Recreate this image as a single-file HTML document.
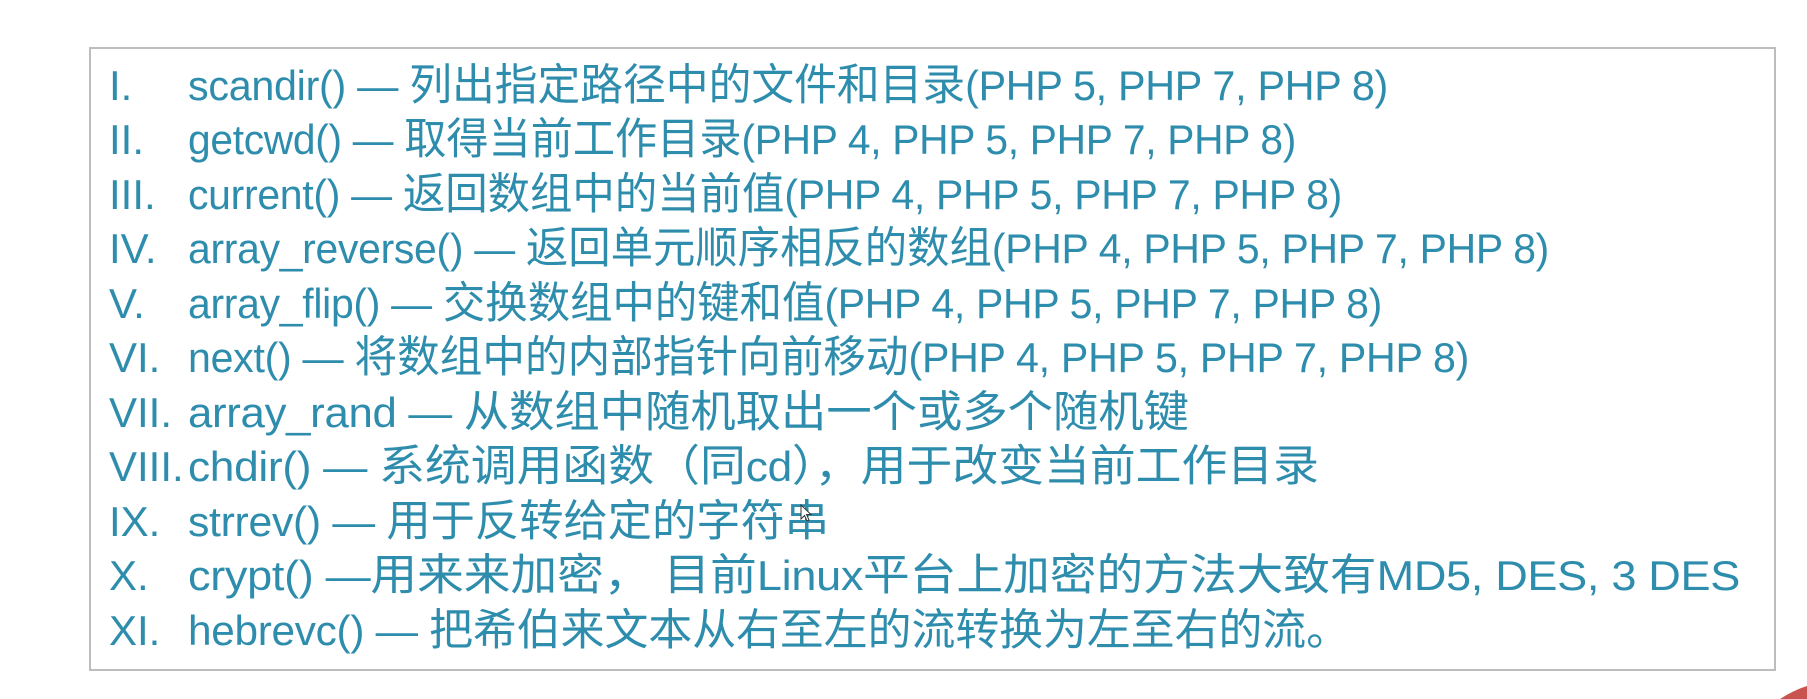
<!DOCTYPE html>
<html><head><meta charset="utf-8"><style>
html,body{margin:0;padding:0;background:#fff;width:1807px;height:699px;overflow:hidden;position:relative}
.box{position:absolute;left:89px;top:47px;width:1683px;height:620px;border:2px solid #bdbdbd;}
.l{position:absolute;left:0;height:54px;line-height:54px;font-family:"Liberation Sans","Noto Sans CJK SC",sans-serif;font-size:42px;color:#2e8dad;white-space:nowrap}
.n{position:absolute;left:109px}
.t{position:absolute;left:188px;letter-spacing:-0.3px;transform-origin:0 50%}
.c{font-size:43.5px;letter-spacing:0}
</style></head><body>
<div class="box"></div>
<div class="l" style="top:59px"><span class="n">I.</span><span class="t" data-w="1388">scandir() — <span class="c">列出指定路径中的文件和目录</span>(PHP 5, PHP 7, PHP 8)</span></div>
<div class="l" style="top:113px"><span class="n">II.</span><span class="t" data-w="1296">getcwd() — <span class="c">取得当前工作目录</span>(PHP 4, PHP 5, PHP 7, PHP 8)</span></div>
<div class="l" style="top:168px"><span class="n">III.</span><span class="t" data-w="1342">current() — <span class="c">返回数组中的当前值</span>(PHP 4, PHP 5, PHP 7, PHP 8)</span></div>
<div class="l" style="top:222px"><span class="n">IV.</span><span class="t" data-w="1549">array_reverse() — <span class="c">返回单元顺序相反的数组</span>(PHP 4, PHP 5, PHP 7, PHP 8)</span></div>
<div class="l" style="top:277px"><span class="n">V.</span><span class="t" data-w="1382">array_flip() — <span class="c">交换数组中的键和值</span>(PHP 4, PHP 5, PHP 7, PHP 8)</span></div>
<div class="l" style="top:331px"><span class="n">VI.</span><span class="t" data-w="1469">next() — <span class="c">将数组中的内部指针向前移动</span>(PHP 4, PHP 5, PHP 7, PHP 8)</span></div>
<div class="l" style="top:386px"><span class="n">VII.</span><span class="t" data-w="1189">array_rand — <span class="c">从数组中随机取出一个或多个随机键</span></span></div>
<div class="l" style="top:440px"><span class="n">VIII.</span><span class="t" data-w="1319">chdir() — <span class="c">系统调用函数（同</span>cd<span class="c">），用于改变当前工作目录</span></span></div>
<div class="l" style="top:495px"><span class="n">IX.</span><span class="t" data-w="829">strrev() — <span class="c">用于反转给定的字符串</span></span></div>
<div class="l" style="top:549px"><span class="n">X.</span><span class="t" data-w="1740">crypt() —<span class="c">用来来加密，&nbsp;目前</span>Linux<span class="c">平台上加密的方法大致有</span>MD5, DES, 3 DES</span></div>
<div class="l" style="top:604px"><span class="n">XI.</span><span class="t" data-w="1350">hebrevc() — <span class="c">把希伯来文本从右至左的流转换为左至右的流。</span></span></div>
<svg style="position:absolute;left:800px;top:504px" width="14" height="20" viewBox="0 0 14 20"><path d="M1 1 L1 15 L4.5 11.5 L7 17 L9 16 L6.5 10.5 L11 10.5 Z" fill="#fff" stroke="#333" stroke-width="1"/></svg>
<svg style="position:absolute;left:1780px;top:686px" width="27" height="13"><path d="M0 13 Q14 4 27 0 L27 13 Z" fill="#c9544f"/></svg>
<script>
document.querySelectorAll('.t').forEach(function(e){
  var w=e.getBoundingClientRect().width, target=+e.getAttribute('data-w')-188;
  if(w>0) e.style.transform='scaleX('+(target/w)+')';
});
</script>
</body></html>
